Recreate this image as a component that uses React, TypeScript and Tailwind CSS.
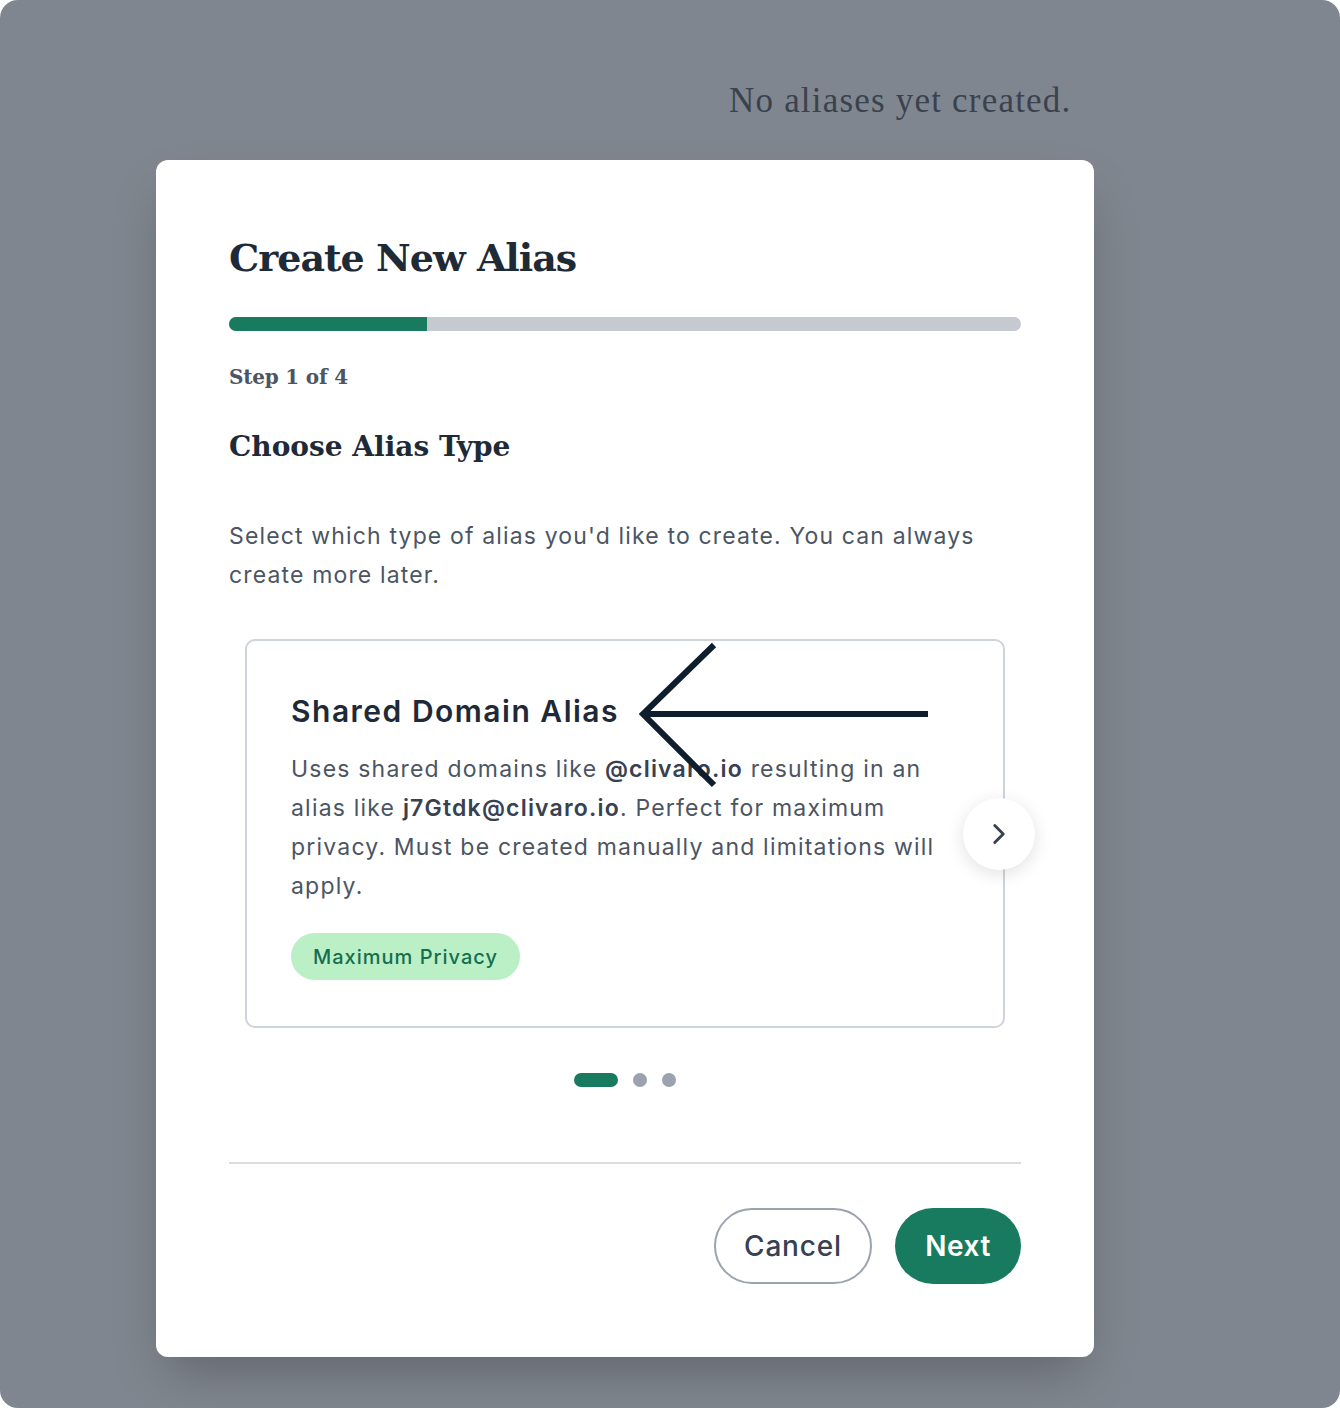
import { ChevronRight } from "lucide-react";

const serif = { fontFamily: '"DejaVu Serif", serif' };

function Arrow() {
  return (
    <svg
      className="absolute left-[390px] top-0 h-[150px] w-[300px] pointer-events-none"
      viewBox="0 0 300 150"
      fill="none"
    >
      <path d="M77 4 L6 73 L77 144" stroke="#0f1e2d" strokeWidth="6" />
      <path d="M6 73 H291" stroke="#0f1e2d" strokeWidth="6" />
    </svg>
  );
}

export default function App() {
  return (
    <div className="w-[1340px] h-[1408px] bg-white">
      <div
        className="h-full rounded-[18px] bg-[#80868f] pt-[80px]"
        style={{ fontFamily: "Inter, sans-serif" }}
      >
        <p
          className="pl-[729px] text-[35px] leading-[42px] tracking-[1.2px] text-[#3a424d]"
          style={{ fontFamily: '"Liberation Serif", serif' }}
        >
          No aliases yet created.
        </p>

        {/* Modal */}
        <div className="ml-[156px] mt-[38px] w-[938px] rounded-[12px] bg-white px-[73px] pt-[74px] pb-[73px] shadow-2xl">
          <h2 className="text-[38px] leading-[48px] font-bold text-[#1f2a37] tracking-[-1px]" style={serif}>
            Create New Alias
          </h2>

          <div className="mt-[35px] h-[14px] w-full rounded-full bg-[#c5cad1]">
            <div className="h-full w-1/4 rounded-l-full bg-[#187b5f]" />
          </div>

          <p className="mt-[32px] text-[20px] leading-[28px] font-bold text-[#4b5563] tracking-[-0.2px]" style={serif}>
            Step 1 of 4
          </p>

          <h3 className="mt-[38px] text-[28px] leading-[36px] font-bold text-[#1f2a37]" style={serif}>
            Choose Alias Type
          </h3>

          <p className="mt-[52px] text-[23px] leading-[39px] tracking-[0.05em] text-[#4b5563]">
            Select which type of alias you'd like to create. You can always create more later.
          </p>

          {/* Card carousel */}
          <div className="relative mx-4 mt-[44px] rounded-[10px] border-2 border-[#cfd4da] pl-[44px] pr-[40px] pt-[50px] pb-[46px]">
            <h4 className="text-[30px] leading-[40px] font-semibold tracking-[0.05em] text-[#1f2937]">
              Shared Domain Alias
            </h4>
            <p className="mt-[19px] text-[23px] leading-[39px] tracking-[0.052em] text-[#4b5563]">
              Uses shared domains like <span className="font-semibold text-[#374151]">@clivaro.io</span> resulting in an alias like{" "}
              <span className="font-semibold text-[#374151]">j7Gtdk@clivaro.io</span>. Perfect for maximum privacy. Must be created manually and limitations will apply.
            </p>
            <span className="mt-[27px] inline-flex h-[47px] items-center rounded-full bg-[#bbf0c7] px-[22px] text-[20px] font-medium tracking-[0.05em] text-[#166e4f]">
              Maximum Privacy
            </span>

            <Arrow />

            <button className="absolute right-[-32px] top-[157px] flex h-[72px] w-[72px] items-center justify-center rounded-full bg-white shadow-[0_4px_18px_rgba(0,0,0,0.12)]">
              <ChevronRight className="h-[34px] w-[34px] text-[#374151]" strokeWidth={2} />
            </button>
          </div>

          {/* Pager dots */}
          <div className="mt-[45px] flex justify-center gap-[15px]">
            <span className="h-[14px] w-[44px] rounded-full bg-[#187b5f]" />
            <span className="h-[14px] w-[14px] rounded-full bg-[#9ca3af]" />
            <span className="h-[14px] w-[14px] rounded-full bg-[#9ca3af]" />
          </div>

          <div className="mt-[75px] h-[2px] bg-[#d9dde2]" />

          <div className="mt-[44px] flex justify-end gap-[23px]">
            <button className="h-[76px] w-[158px] rounded-full border-2 border-[#9ca3af] text-[28px] font-medium tracking-[0.03em] text-[#374151]">
              Cancel
            </button>
            <button className="h-[76px] w-[126px] rounded-full bg-[#187b5f] text-[28px] font-semibold tracking-[0.02em] text-white">
              Next
            </button>
          </div>
        </div>
      </div>
    </div>
  );
}
